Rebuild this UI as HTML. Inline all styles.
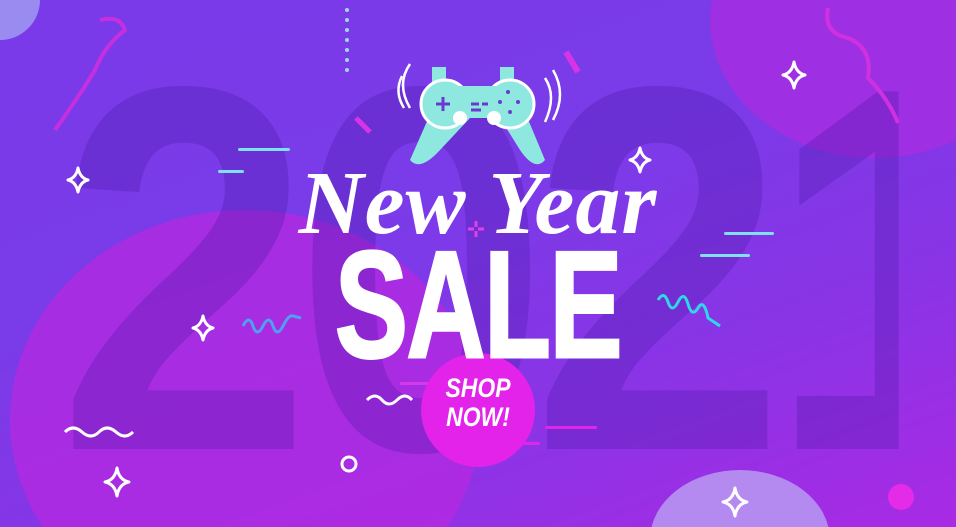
<!DOCTYPE html>
<html><head><style>
html,body{margin:0;padding:0;width:956px;height:527px;overflow:hidden}
#w{width:956px;height:527px;overflow:hidden;position:relative;font-family:"Liberation Sans",sans-serif;
background:linear-gradient(160deg,#7b3ae9 0%,#7a3be8 40%,#8a34e6 70%,#a92ae4 100%);}
.big{position:absolute;left:0;top:20px;width:956px;height:500px;overflow:hidden;text-align:center;font-weight:bold;font-size:520px;line-height:500px;letter-spacing:-20px;color:rgba(70,20,160,0.28);transform:scaleX(0.88)}
.ln{position:absolute;height:3px;border-radius:2px}
</style></head><body><div id="w">
<svg width="956" height="527" style="position:absolute;left:0;top:0">
<circle cx="0" cy="0" r="40" fill="#9a8bf0"/>
<ellipse cx="875" cy="20" rx="165" ry="138" fill="#a42ee0" opacity=".85"/>
<ellipse cx="245" cy="420" rx="235" ry="210" fill="#b52ae0" opacity=".75"/>
<ellipse cx="740" cy="540" rx="90" ry="70" fill="#b58af0"/>
</svg>
<div class="big">2021</div>
<div class="ln" style="left:238px;top:148px;width:52px;background:#7fe0f0"></div>
<div class="ln" style="left:218px;top:170px;width:26px;background:#7fe0f0"></div>
<div class="ln" style="left:724px;top:232px;width:50px;background:#7fe0f0"></div>
<div class="ln" style="left:700px;top:254px;width:50px;background:#7fe0f0"></div>
<div class="ln" style="left:400px;top:382px;width:40px;background:#d33ae8"></div>
<div class="ln" style="left:545px;top:426px;width:52px;background:#e026e8"></div>
<div class="ln" style="left:480px;top:442px;width:60px;background:#e026e8"></div>
<svg width="956" height="527" style="position:absolute;left:0;top:0">
<g fill="#9fd8f6"><circle cx="347" cy="10" r="2"/><circle cx="347" cy="20" r="2"/><circle cx="347" cy="30" r="2"/><circle cx="347" cy="40" r="2"/><circle cx="347" cy="50" r="2"/><circle cx="347" cy="60" r="2"/><circle cx="347" cy="70" r="2"/></g>
<g fill="none" stroke="#fff" stroke-width="3" stroke-linejoin="round">
<path d="M78 168 Q80 178 88 180 Q80 182 78 192 Q76 182 68 180 Q76 178 78 168Z"/>
<path d="M203 316 Q205 326 213 328 Q205 330 203 340 Q201 330 193 328 Q201 326 203 316Z"/>
<path d="M117 468 Q119 480 129 482 Q119 484 117 496 Q115 484 105 482 Q115 480 117 468Z"/>
<path d="M640 148 Q642 158 650 160 Q642 162 640 172 Q638 162 630 160 Q638 158 640 148Z"/>
<path d="M794 62 Q796 73 805 75 Q796 77 794 88 Q792 77 783 75 Q792 73 794 62Z"/>
<path d="M735 488 Q737 500 747 502 Q737 504 735 516 Q733 504 723 502 Q733 500 735 488Z"/>
<path d="M65 432 q8 -8 17 0 t17 0 t17 0 t17 0"/>
<path d="M367 400 q8 -8 15 0 t15 0 t15 0"/>
<circle cx="349" cy="464" r="7"/>
</g>
<path d="M243 326 q6 -12 10 0 t10 0 t10 0 t10 0 t10 -10 l8 2" fill="none" stroke="#4fa0f0" stroke-width="3"/>
<path d="M658 300 q6 -10 10 2 t10 0 t10 2 t10 4 t10 10 l12 8" fill="none" stroke="#2ed8e8" stroke-width="3"/>
<path d="M100 20 q20 -5 25 10 q-20 15 -30 40 q-15 25 -40 60" fill="none" stroke="#c62fe0" stroke-width="4"/>
<path d="M828 8 q-5 25 20 30 q25 10 20 40 q20 20 30 45" fill="none" stroke="#d031e0" stroke-width="4"/>
<path d="M566 52 l12 20" stroke="#d933e8" stroke-width="6"/>
<path d="M356 118 l14 14" stroke="#d933e8" stroke-width="5"/>
<g stroke="#e040e8" stroke-width="3"><path d="M468 229h6M478 229h6M476 221v6M476 231v6"/></g>
<circle cx="901" cy="497" r="13" fill="#e32be8"/>
<g>
<rect x="432" y="67" width="14" height="16" fill="#8ee8e0"/><rect x="500" y="67" width="14" height="16" fill="#8ee8e0"/>
<path d="M432 110 L410 160 Q420 172 440 150 L470 118 L500 118 L520 150 Q535 172 545 160 L520 100 Z" fill="#8ee8e0"/>
<circle cx="445" cy="104" r="24" fill="#8ee8e0" stroke="#fff" stroke-width="3"/>
<circle cx="510" cy="104" r="24" fill="#8ee8e0" stroke="#fff" stroke-width="3"/>
<rect x="445" y="86" width="65" height="30" fill="#8ee8e0"/>
<circle cx="460" cy="118" r="7" fill="#fff"/><circle cx="494" cy="118" r="7" fill="#fff"/>
<g stroke="#6a3ad0" stroke-width="3"><path d="M436 104h14M443 97v14M471 104h8M471 110h10M482 104h6"/></g>
<g fill="#6a3ad0"><circle cx="508" cy="92" r="2"/><circle cx="500" cy="102" r="2"/><circle cx="518" cy="102" r="2"/><circle cx="510" cy="112" r="2"/></g>
<g fill="none" stroke="#fff" stroke-width="2.5"><path d="M410 64 q-14 20 0 44"/><path d="M402 76 q-8 16 2 32"/><path d="M545 78 q12 18 0 44"/><path d="M553 70 q14 24 0 50"/></g>
</g>
<circle cx="478" cy="410" r="57" fill="#e322ea"/>
</svg>
<div style="position:absolute;left:228px;top:156px;width:500px;text-align:center;font-family:'Liberation Serif',serif;font-style:italic;font-weight:bold;font-size:90px;line-height:96px;color:#fff;letter-spacing:1px">New Year</div>
<div style="position:absolute;left:278px;top:240px;width:400px;height:126px;text-align:center;font-weight:bold;font-size:152px;line-height:130px;color:#fff;transform:scaleX(0.72);letter-spacing:-2px;-webkit-text-stroke:3px #fff">SALE</div>
<div style="position:absolute;left:428px;top:374px;width:100px;text-align:center;font-weight:bold;font-style:italic;font-size:27px;line-height:29px;color:#fff;transform:scaleX(0.85)">SHOP<br>NOW!</div>
</div></body></html>
